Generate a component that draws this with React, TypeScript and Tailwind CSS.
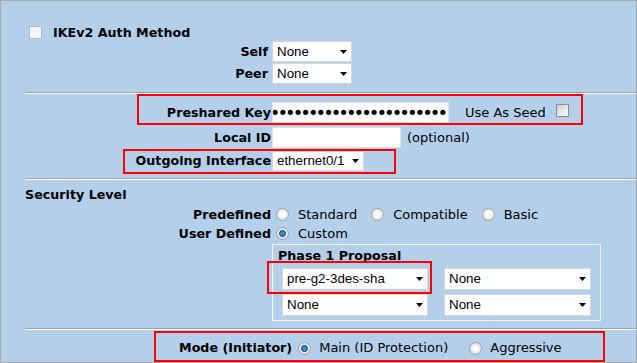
import React from "react";

function Arrow() {
	return (
		<svg width="7" height="4" viewBox="0 0 7 4" className="shrink-0">
			<path d="M0 0h7L3.5 4z" fill="#000" />
		</svg>
	);
}

function Select({ value, className }: { value: string; className: string }) {
	return (
		<div
			className={`flex items-center justify-between border border-[#d6d6d6] bg-white pl-[4px] pr-[4px] font-['Liberation_Sans',Arial,sans-serif] text-[13.33px] text-black ${className}`}
		>
			<span>{value}</span>
			<Arrow />
		</div>
	);
}

function Checkbox({ faint }: { faint?: boolean }) {
	return (
		<span
			className={
				faint
					? "inline-block h-[13px] w-[13px] shrink-0 border border-[#b9b9b9] bg-[#f4f4f4]"
					: "inline-block h-[13px] w-[13px] shrink-0 border border-[#8d8d8d] bg-linear-to-br from-[#cfcfcf] to-white"
			}
		/>
	);
}

function Radio({ checked }: { checked?: boolean }) {
	return (
		<span className="inline-flex h-[13px] w-[13px] shrink-0 items-center justify-center rounded-full border border-[#a3a3a3] bg-radial from-white from-20% to-[#d0d0d0]">
			{checked && (
				<span className="h-[7px] w-[7px] rounded-full border border-[#0d3a63] bg-[#2f8fd8]" />
			)}
		</span>
	);
}

function Rule({ className }: { className: string }) {
	return (
		<div
			className={`ml-[24px] border-t border-b border-t-[#a0a0a0] border-b-white ${className}`}
		/>
	);
}

function Row({
	label,
	children,
	className,
	labelClass = "",
}: {
	label: string;
	children: React.ReactNode;
	className: string;
	labelClass?: string;
}) {
	return (
		<div className={`flex items-center ${className}`}>
			<span
				className={`w-[270px] shrink-0 text-right text-[12.7px] font-bold whitespace-nowrap ${labelClass}`}
			>
				{label}
			</span>
			<div className="ml-[1px] flex items-center">{children}</div>
		</div>
	);
}

const dots = "•".repeat(26);

export default function App() {
	return (
		<div className="relative h-[363px] w-[637px] overflow-hidden border border-[#a9a9a9] bg-[#b4cfea] pt-[23px] font-['DejaVu_Sans',Verdana,sans-serif] text-[13px] text-black">
			{/* IKEv2 */}
			<div className="flex h-[17px] items-center pl-[28px]">
				<Checkbox faint />
				<span className="ml-[11px] text-[12.7px] font-bold">
					IKEv2 Auth Method
				</span>
			</div>
			<Row label="Self" className="h-[21px]" labelClass="pr-[3px]">
				<Select value="None" className="h-[21px] w-[80px]" />
			</Row>
			<Row label="Peer" className="mt-[1px] h-[21px]" labelClass="pr-[3px]">
				<Select value="None" className="h-[21px] w-[80px]" />
			</Row>

			<Rule className="mt-[8px]" />

			<Row label="Preshared Key" className="mt-[8px] h-[21px]">
				<div className="flex h-[21px] w-[177px] items-center justify-end overflow-hidden border border-[#e2e2e2] bg-white pr-[3px] text-[18px] leading-none tracking-[-3px] whitespace-nowrap">
					<span className="shrink-0">{dots}</span>
				</div>
				<span className="ml-[16px]">Use As Seed</span>
				<span className="ml-[10px]">
					<Checkbox />
				</span>
			</Row>
			<Row label="Local ID" className="mt-[4px] h-[21px]">
				<div className="h-[21px] w-[129px] border border-[#e2e2e2] bg-white" />
				<span className="ml-[6px]">(optional)</span>
			</Row>
			<Row label="Outgoing Interface" className="mt-[3px] h-[20px]">
				<Select value="ethernet0/1" className="h-[20px] w-[92px]" />
			</Row>

			<Rule className="mt-[7px]" />

			{/* Security level */}
			<div className="mt-[7px] flex h-[16px] items-center pl-[24px] text-[12.7px] font-bold">
				Security Level
			</div>
			<Row label="Predefined" className="mt-[2px] h-[19px]">
				<span className="ml-[4px] flex items-center">
					<Radio />
				</span>
				<span className="ml-[9px]">Standard</span>
				<span className="ml-[14px] flex items-center">
					<Radio />
				</span>
				<span className="ml-[9px]">Compatible</span>
				<span className="ml-[14px] flex items-center">
					<Radio />
				</span>
				<span className="ml-[9px]">Basic</span>
			</Row>
			<Row label="User Defined" className="h-[19px]">
				<span className="ml-[4px] flex items-center">
					<Radio checked />
				</span>
				<span className="ml-[9px]">Custom</span>
			</Row>

			{/* Phase 1 proposal */}
			<div className="mt-[1px] ml-[271px] w-[329px] border border-[#f2f4f6] pb-[4px]">
				<div className="flex h-[19px] items-center pt-[2px] pl-[5px] text-[12.7px] font-bold">
					Phase 1 Proposal
				</div>
				<div className="mt-[4px] flex gap-[16px] pl-[9px]">
					<Select value="pre-g2-3des-sha" className="h-[22px] w-[146px]" />
					<Select value="None" className="h-[22px] w-[147px]" />
				</div>
				<div className="mt-[4px] flex gap-[16px] pl-[9px]">
					<Select value="None" className="h-[22px] w-[146px]" />
					<Select value="None" className="h-[22px] w-[147px]" />
				</div>
			</div>

			<Rule className="mt-[7px]" />

			{/* Mode */}
			<div className="flex h-[36px] items-center pl-[178px]">
				<span className="text-[12.7px] font-bold">Mode (Initiator)</span>
				<span className="ml-[6px] flex items-center">
					<Radio checked />
				</span>
				<span className="ml-[8px]">Main (ID Protection)</span>
				<span className="ml-[21px] flex items-center">
					<Radio />
				</span>
				<span className="ml-[8px]">Aggressive</span>
			</div>

			{/* annotation boxes */}
			<div className="absolute top-[93px] left-[136px] h-[31px] w-[446px] border-2 border-[#ff0000]" />
			<div className="absolute top-[148px] left-[122px] h-[25px] w-[273px] border-2 border-[#ff0000]" />
			<div className="absolute top-[260px] left-[266px] h-[33px] w-[165px] border-2 border-[#ff0000]" />
			<div className="absolute top-[330px] left-[153px] h-[31px] w-[451px] border-2 border-[#ff0000]" />
		</div>
	);
}
